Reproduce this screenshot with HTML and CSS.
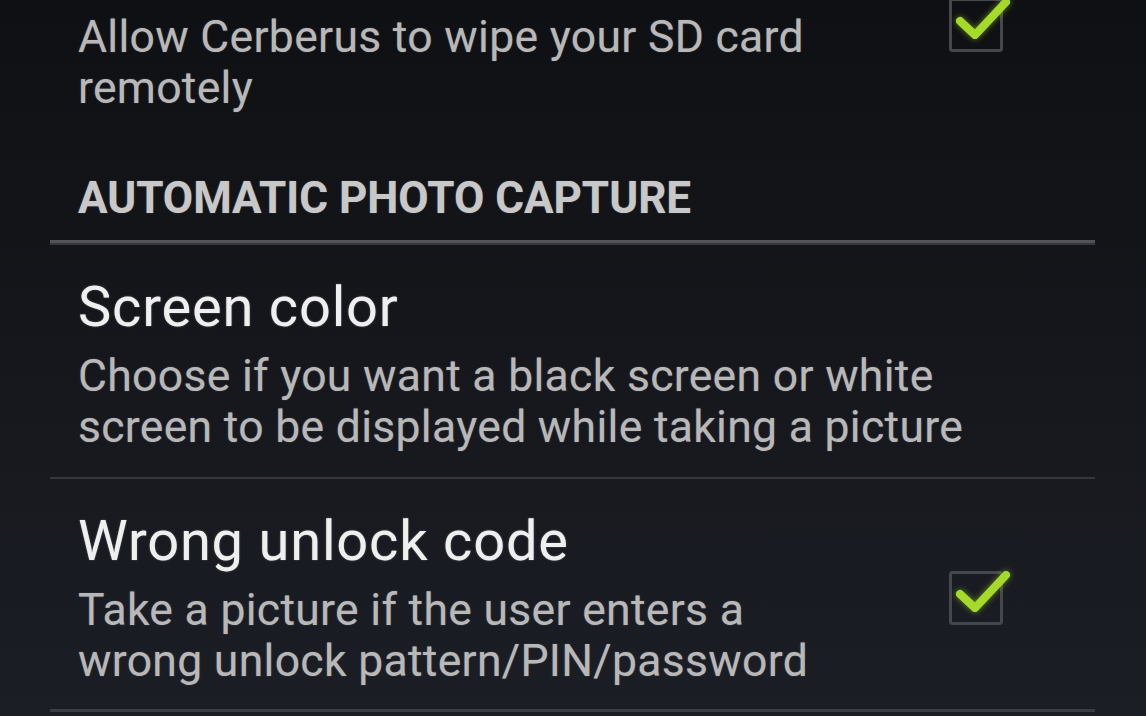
FILE: index.html
```html
<!DOCTYPE html>
<html lang="en">
<head>
    <meta charset="UTF-8">
    <meta name="viewport" content="width=device-width, initial-scale=1.0">
    <title>Cerberus - Settings</title>
    <link rel="stylesheet" href="styles.css">
</head>
<body>

    <div class="prefs">
        <div class="pref pref-first">
            <div class="pref-text">
                <div class="pref-title">Wipe SD card</div>
                <div class="pref-summary">Allow Cerberus to wipe your SD card remotely</div>
            </div>
            <div class="pref-widget">
                <svg class="checkbox" width="54" height="54" viewBox="0 0 54 54">
                    <rect class="box" x="1.5" y="1.5" width="51" height="51" rx="2"/>
                    <polyline class="tick" points="11,23 26,37 57,4"/>
                </svg>
            </div>
        </div>

        <div class="category">AUTOMATIC PHOTO CAPTURE</div>

        <div class="pref">
            <div class="pref-text">
                <div class="pref-title">Screen color</div>
                <div class="pref-summary">Choose if you want a black screen or white screen to be displayed while taking a picture</div>
            </div>
        </div>

        <div class="pref pref-last">
            <div class="pref-text">
                <div class="pref-title">Wrong unlock code</div>
                <div class="pref-summary">Take a picture if the user enters a wrong unlock pattern/PIN/password</div>
            </div>
            <div class="pref-widget">
                <svg class="checkbox" width="54" height="54" viewBox="0 0 54 54">
                    <rect class="box" x="1.5" y="1.5" width="51" height="51" rx="2"/>
                    <polyline class="tick" points="11,23 26,37 57,4"/>
                </svg>
            </div>
        </div>
    </div>

</body>
</html>
```

FILE: styles.css
```css
* {
    margin: 0;
    padding: 0;
    box-sizing: border-box;
    font-family: Roboto, "Liberation Sans", sans-serif;
}

html, body {
    height: 100%;
}

body {
    background: linear-gradient(#0f1013, #1b1e25);
    color: #ececec;
    overflow: hidden;
}

.prefs {
    margin: -94px 51px 0 50px;
}

.pref {
    display: flex;
    align-items: center;
    padding: 30px 92px 24px 28px;
    border-top: 2px solid #34373c;
}

.pref-first {
    border-top: none;
}

.pref-last {
    padding-bottom: 22px;
    border-bottom: 3px solid #3a3d43;
}

.pref-text {
    flex: 1;
}

.pref-title {
    font-size: 56px;
    line-height: 64px;
    letter-spacing: 0.8px;
    color: #efefef;
    text-shadow: 0 0 2px rgba(255, 255, 255, 0.35);
}

.pref-summary {
    margin-top: 12px;
    font-size: 44.5px;
    line-height: 51px;
    letter-spacing: 0.3px;
    color: #b8b8b8;
    text-shadow: 0 0 1.5px rgba(200, 200, 200, 0.35);
}

.pref-widget {
    margin-left: 91px;
    display: flex;
}

.checkbox {
    overflow: visible;
}

.checkbox .box {
    fill: none;
    stroke: #44474c;
    stroke-width: 3;
}

.checkbox .tick {
    fill: none;
    stroke: #a6da2a;
    stroke-width: 8;
    stroke-linecap: round;
    stroke-linejoin: round;
    filter: drop-shadow(0 0 3px rgba(150, 210, 30, 0.6));
}

.category {
    padding: 35px 0 17px 28px;
    font-size: 44px;
    line-height: 50px;
    font-weight: bold;
    color: #c8c8c8;
    text-shadow: 0 0 1.5px rgba(200, 200, 200, 0.35);
    border-bottom: 3px solid #505358;
}
```
